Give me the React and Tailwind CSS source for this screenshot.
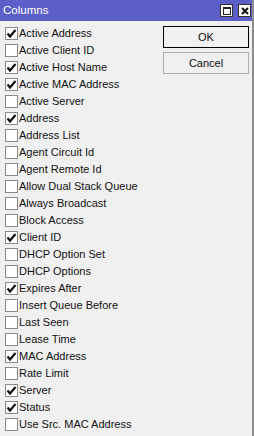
const columns = [
  ['Active Address', true],
  ['Active Client ID', false],
  ['Active Host Name', true],
  ['Active MAC Address', true],
  ['Active Server', false],
  ['Address', true],
  ['Address List', false],
  ['Agent Circuit Id', false],
  ['Agent Remote Id', false],
  ['Allow Dual Stack Queue', false],
  ['Always Broadcast', false],
  ['Block Access', false],
  ['Client ID', true],
  ['DHCP Option Set', false],
  ['DHCP Options', false],
  ['Expires After', true],
  ['Insert Queue Before', false],
  ['Last Seen', false],
  ['Lease Time', false],
  ['MAC Address', true],
  ['Rate Limit', false],
  ['Server', true],
  ['Status', true],
  ['Use Src. MAC Address', false],
];

function Check({ on }) {
  return (
    <span className="w-[13px] h-[13px] shrink-0 border border-[#8a8a8a] bg-white flex items-center justify-center">
      {on && (
        <svg width="11" height="11" viewBox="0 0 11 11">
          <path d="M1.5 5.5 L4 8.5 L9.5 2" fill="none" stroke="#111" strokeWidth="2.2" />
        </svg>
      )}
    </span>
  );
}

export default function App() {
  return (
    <div className="w-[254px] h-[436px] bg-[#f0f0f0] flex flex-col font-['Liberation_Sans',Arial,sans-serif] text-[#111] border-r-2 border-[#8c8c8c]">
      {/* title bar */}
      <div className="h-[21px] bg-[#5b5fc7] flex items-center justify-between pl-[3px] pr-[1px]">
        <span className="text-white text-[11.5px]">Columns</span>
        <div className="flex gap-[5px]">
          <span className="w-[13px] h-[13px] bg-white border border-[#333] flex items-center justify-center">
            <span className="w-[8px] h-[8px] border border-[#222] border-t-2" />
          </span>
          <span className="w-[13px] h-[13px] bg-white border border-[#333] flex items-center justify-center">
            <svg width="8" height="8" viewBox="0 0 8 8">
              <path d="M1 1 L7 7 M7 1 L1 7" stroke="#111" strokeWidth="2" />
            </svg>
          </span>
        </div>
      </div>

      <div className="flex flex-1 pt-[4px]">
        <div className="flex flex-col pl-[5px] w-[163px]">
          {columns.map(([name, on]) => (
            <div key={name} className="h-[17px] flex items-center gap-[1px] text-[11px] whitespace-nowrap">
              <Check on={on} />
              <span>{name}</span>
            </div>
          ))}
        </div>
        <div className="flex flex-col gap-[4px] pt-[1px]">
          <button className="w-[86px] h-[22px] border border-black bg-[#f0f0f0] text-[11px]">OK</button>
          <button className="w-[86px] h-[22px] border border-[#adadad] bg-[#f0f0f0] text-[11px]">Cancel</button>
        </div>
      </div>
    </div>
  );
}
